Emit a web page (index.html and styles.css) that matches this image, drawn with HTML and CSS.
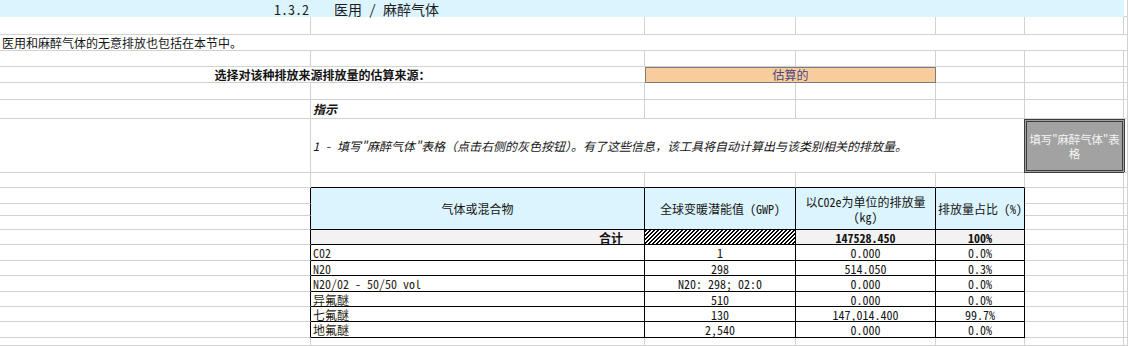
FILE: index.html
```html
<!DOCTYPE html>
<html lang="zh">
<head>
<meta charset="utf-8">
<title>医用 / 麻醉气体</title>
<link rel="stylesheet" href="styles.css">
</head>
<body>
<div class="sheet">
  <!-- r1 -->
  <div class="title"><span class="num">1.3.2</span><span>医用 / 麻醉气体</span></div>
  <div class="c"></div>
  <!-- r2 -->
  <div class="c"></div><div class="c"></div><div class="c"></div><div class="c"></div><div class="c"></div><div class="c"></div><div class="c"></div>
  <!-- r3 -->
  <div class="c span-all txt">医用和麻醉气体的无意排放也包括在本节中。</div>
  <!-- r4 -->
  <div class="c"></div><div class="c"></div><div class="c"></div><div class="c"></div><div class="c"></div><div class="c"></div><div class="c"></div>
  <!-- r5 -->
  <div class="c span2 ask">选择对该种排放来源排放量的估算来源：</div>
  <div class="c span2 choice">估算的</div>
  <div class="c"></div><div class="c"></div><div class="c"></div>
  <!-- r6 -->
  <div class="c"></div><div class="c"></div><div class="c"></div><div class="c"></div><div class="c"></div><div class="c"></div><div class="c"></div>
  <!-- r7 -->
  <div class="c"></div><div class="c txt hint">指示</div><div class="c"></div><div class="c"></div><div class="c"></div><div class="c"></div><div class="c"></div>
  <!-- r8 -->
  <div class="c"></div>
  <div class="c span4 txt step">1 - 填写"麻醉气体"表格（点击右侧的灰色按钮）。有了这些信息，该工具将自动计算出与该类别相关的排放量。</div>
  <div class="btn-cell"><div class="btn">填写"麻醉气体"表<br>格</div></div>
  <div class="c"></div>
  <!-- r9 -->
  <div class="c"></div><div class="c above"></div><div class="c above"></div><div class="c above"></div><div class="c above"></div><div class="c"></div><div class="c"></div>

  <!-- gas table -->
  <div class="gas">
    <div class="g head">气体或混合物</div>
    <div class="g head">全球变暖潜能值 (GWP)</div>
    <div class="g head wrap">以C02e为单位的排放量 (kg)</div>
    <div class="g head">排放量占比 (%)</div>

    <div class="g total right">合计</div>
    <div class="g hatch"></div>
    <div class="g total mid">147528.450</div>
    <div class="g total mid">100%</div>

    <div class="g name">C02</div><div class="g mid">1</div><div class="g mid">0.000</div><div class="g mid">0.0%</div>
    <div class="g name">N20</div><div class="g mid">298</div><div class="g mid">514.050</div><div class="g mid">0.3%</div>
    <div class="g name">N20/02 - 50/50 vol</div><div class="g mid">N20: 298; 02:0</div><div class="g mid">0.000</div><div class="g mid">0.0%</div>
    <div class="g name">异氟醚</div><div class="g mid">510</div><div class="g mid">0.000</div><div class="g mid">0.0%</div>
    <div class="g name">七氟醚</div><div class="g mid">130</div><div class="g mid">147,014.400</div><div class="g mid">99.7%</div>
    <div class="g name">地氟醚</div><div class="g mid">2,540</div><div class="g mid">0.000</div><div class="g mid">0.0%</div>
  </div>

  <!-- r10 - r19 side cells -->
  <div class="c edge"></div><div class="c"></div><div class="c"></div>
  <div class="c edge"></div><div class="c"></div><div class="c"></div>
  <div class="c edge"></div><div class="c"></div><div class="c"></div>
  <div class="c edge"></div><div class="c"></div><div class="c"></div>
  <div class="c edge"></div><div class="c"></div><div class="c"></div>
  <div class="c edge"></div><div class="c"></div><div class="c"></div>
  <div class="c edge"></div><div class="c"></div><div class="c"></div>
  <div class="c edge"></div><div class="c"></div><div class="c"></div>
  <div class="c edge"></div><div class="c"></div><div class="c"></div>
  <div class="c edge"></div><div class="c"></div><div class="c"></div>
  <!-- r20 -->
  <div class="c"></div><div class="c"></div><div class="c"></div><div class="c"></div><div class="c"></div><div class="c"></div><div class="c"></div>
</div>
</body>
</html>
```

FILE: styles.css
```css
* { box-sizing: border-box; }

html, body {
  margin: 0;
  background: #ffffff;
}

body {
  font-family: "Noto Sans Mono CJK SC", "Noto Sans CJK SC", monospace;
  font-size: 12px;
  line-height: 14px;
  color: #141414;
  width: 1128px;
  height: 346px;
  overflow: hidden;
}

.sheet {
  display: grid;
  grid-template-columns: 311px 334px 151px 140px 89px 99px 1fr;
  grid-template-rows: 17px 18px 16px 16px 16px 17px 19px 54px 15px 16px 12px 14px 15px 16px 15px 16px 15px 15px 16px 8px;
  width: 1128px;
  height: 346px;
  overflow: hidden;
}

.c {
  border-right: 1px solid #d2d2d2;
  border-bottom: 1px solid #d2d2d2;
  display: flex;
  align-items: center;
  white-space: nowrap;
  min-width: 0;
}

.title {
  grid-column: 1 / span 6;
  background: #dcf4fe;
  display: flex;
  align-items: center;
  padding-left: 274px;
  font-size: 14px;
  color: #1e1e1e;
  gap: 25px;
}

.span-all { grid-column: 1 / -1; }
.span2 { grid-column: span 2; }
.span4 { grid-column: span 4; }

.txt { padding-left: 2px; }

.ask {
  justify-content: center;
  font-weight: 700;
  border-right: none;
}

.choice {
  justify-content: center;
  background: #f9cd9b;
  border: 1px solid #7c7c7c;
  color: #4a4282;
}

.hint {
  font-style: italic;
  font-weight: 700;
}

.step {
  font-style: italic;
  border-right: none;
}

.btn-cell {
  display: flex;
  padding: 0;
}

.btn {
  flex: 1;
  margin: 0 -1px;
  background: #a2a2a2;
  border: 3px double #3c3c3c;
  color: #f4f4f4;
  display: flex;
  align-items: center;
  justify-content: center;
  text-align: center;
  white-space: nowrap;
  line-height: 14px;
  font-size: 11.5px;
  letter-spacing: -0.2px;
}

.above { border-bottom-color: #000; }
.edge { border-right-color: #000; }

.gas {
  grid-column: 2 / span 4;
  grid-row: 10 / span 10;
  display: grid;
  grid-template-columns: 334px 151px 140px 89px;
  grid-template-rows: 42px 15px 16px 15px 16px 15px 15px 16px;
}

.g {
  border-right: 1px solid #000;
  border-bottom: 1px solid #000;
  display: flex;
  align-items: center;
  white-space: nowrap;
  min-width: 0;
  line-height: 13px;
}

.head {
  background: #dcf4fd;
  justify-content: center;
  text-align: center;
  line-height: 15px;
}

.head.wrap { white-space: normal; padding: 0 8px; }

.total {
  background: #f2f2f2;
  font-weight: 700;
}

.right { justify-content: flex-end; padding-right: 21px; }
.mid { justify-content: center; }

.hatch {
  background: repeating-linear-gradient(135deg, #000 0 1.5px, #ffffff 1.5px 2.83px);
}

.name {
  padding-left: 2px;
  color: #2a1f14;
}
```
